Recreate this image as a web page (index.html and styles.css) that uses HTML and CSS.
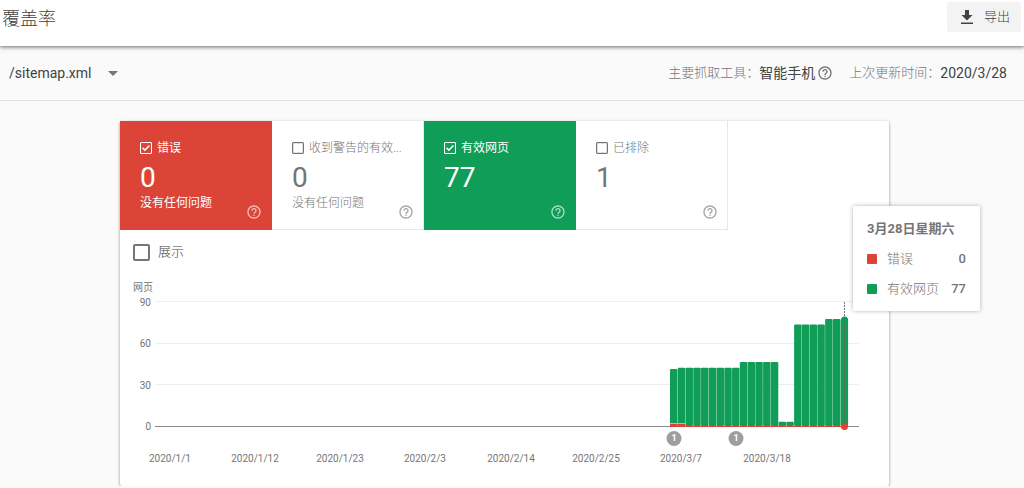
FILE: index.html
```html
<!DOCTYPE html>
<html lang="zh-CN">
<head>
<meta charset="utf-8">
<meta name="viewport" content="width=device-width, initial-scale=1">
<title>覆盖率</title>
<link rel="stylesheet" href="styles.css">
</head>
<body>
<svg class="defs" width="0" height="0" aria-hidden="true">
  <symbol id="help" viewBox="0 0 24 24">
    <path d="M11 18h2v-2h-2v2zm1-16C6.480 2 2 6.480 2 12s4.480 10 10 10 10-4.480 10-10S17.520 2 12 2zm0 18c-4.410 0-8-3.590-8-8s3.590-8 8-8 8 3.590 8 8-3.590 8-8 8zm0-14c-2.210 0-4 1.790-4 4h2c0-1.100.9-2 2-2s2 .9 2 2c0 2-3 1.750-3 5h2c0-2.250 3-2.500 3-5 0-2.210-1.790-4-4-4z"/>
  </symbol>
</svg>

<header class="topbar">
  <h1 class="title">覆盖率</h1>
  <button class="export" type="button">
    <svg class="export-icon" viewBox="0 0 12 14" aria-hidden="true"><path d="M4 0h4v5h3.500L6 10.500 .5 5H4zM0 12.500h12V14H0z"/></svg>
    <span>导出</span>
  </button>
</header>

<div class="filterbar">
  <div class="picker">
    <select class="picker-select" aria-label="站点地图"><option>/sitemap.xml</option></select>
    <svg class="picker-arrow" viewBox="0 0 10 5" aria-hidden="true"><path d="M0 0h10L5 5z"/></svg>
  </div>
  <div class="meta">
    <span class="meta-label">主要抓取工具：</span>
    <span class="meta-value">智能手机</span>
    <button class="help" type="button" aria-label="帮助"><svg viewBox="0 0 24 24"><use href="#help"/></svg></button>
    <span class="meta-label meta-updated">上次更新时间：</span>
    <span class="meta-value">2020/3/28</span>
  </div>
</div>

<main class="content">
  <section class="card">
    <div class="tiles">
      <div class="tile tile-error">
        <label class="tile-label"><input class="check" type="checkbox" checked><span class="tile-name">错误</span></label>
        <div class="tile-count">0</div>
        <div class="tile-note">没有任何问题</div>
        <button class="help tile-help" type="button" aria-label="帮助"><svg viewBox="0 0 24 24"><use href="#help"/></svg></button>
      </div>
      <div class="tile">
        <label class="tile-label"><input class="check" type="checkbox"><span class="tile-name">收到警告的有效...</span></label>
        <div class="tile-count">0</div>
        <div class="tile-note">没有任何问题</div>
        <button class="help tile-help" type="button" aria-label="帮助"><svg viewBox="0 0 24 24"><use href="#help"/></svg></button>
      </div>
      <div class="tile tile-valid">
        <label class="tile-label"><input class="check" type="checkbox" checked><span class="tile-name">有效网页</span></label>
        <div class="tile-count">77</div>
        <button class="help tile-help" type="button" aria-label="帮助"><svg viewBox="0 0 24 24"><use href="#help"/></svg></button>
      </div>
      <div class="tile">
        <label class="tile-label"><input class="check" type="checkbox"><span class="tile-name">已排除</span></label>
        <div class="tile-count">1</div>
        <button class="help tile-help" type="button" aria-label="帮助"><svg viewBox="0 0 24 24"><use href="#help"/></svg></button>
      </div>
    </div>

    <label class="impressions"><input class="check check-large" type="checkbox"><span>展示</span></label>

    <div class="chart">
      <svg class="plot" viewBox="0 0 769 212" role="img" aria-label="网页">
        <g class="axis">
          <text class="axis-title" x="13" y="17">网页</text>
          <g text-anchor="end">
            <text x="31" y="32">90</text>
            <text x="31" y="73">60</text>
            <text x="31" y="115">30</text>
            <text x="31" y="156">0</text>
          </g>
          <g text-anchor="middle">
            <text x="50" y="188">2020/1/1</text>
            <text x="135" y="188">2020/1/12</text>
            <text x="220" y="188">2020/1/23</text>
            <text x="305" y="188">2020/2/3</text>
            <text x="391" y="188">2020/2/14</text>
            <text x="476" y="188">2020/2/25</text>
            <text x="561" y="188">2020/3/7</text>
            <text x="647" y="188">2020/3/18</text>
          </g>
        </g>
        <path class="grid" d="M35 27.500H739M35 69.500H739M35 110.500H739"/>
        <path class="baseline" d="M35 152.500H739"/>
        <g id="bars"></g>
        <path class="error-line" d="M550 152.500H725"/>
        <path class="cursor" d="M724.500 28V45"/>
        <path class="cursor-in" d="M724.500 48V152"/>
        <circle class="valid" cx="724.500" cy="46" r="3.500"/>
        <circle class="error" cx="724.500" cy="152.500" r="3.500"/>
        <g class="note">
          <circle cx="554" cy="164.500" r="7.500"/><text x="554" y="167">1</text>
          <circle cx="616" cy="164.500" r="7.500"/><text x="616" y="167">1</text>
        </g>
      </svg>
      <div class="tooltip">
        <div class="tooltip-title">3月28日星期六</div>
        <div class="tooltip-row"><i class="swatch swatch-error"></i><span>错误</span><b class="tooltip-value">0</b></div>
        <div class="tooltip-row"><i class="swatch swatch-valid"></i><span>有效网页</span><b class="tooltip-value">77</b></div>
      </div>
    </div>
  </section>
</main>
<script src="chart.js"></script>
</body>
</html>
```

FILE: styles.css
```css
* { box-sizing: border-box; }

body {
  margin: 0;
  background: #fafafa;
  color: #757575;
  font: 300 13px/18px Roboto, "Noto Sans CJK SC", sans-serif;
  overflow-x: hidden;
}

button, select, input { font: inherit; color: inherit; margin: 0; }

.defs { position: absolute; }

.topbar {
  display: flex;
  justify-content: space-between;
  align-items: flex-start;
  height: 46px;
  padding: 2px 3px 0 2px;
  background: #fff;
  box-shadow: 0 1px 4px rgba(0, 0, 0, .6);
}

.title {
  margin: 5px 0 0;
  color: #424242;
  font-size: 18px;
  font-weight: 300;
  line-height: 24px;
}

.export {
  display: flex;
  align-items: center;
  gap: 11px;
  height: 30px;
  padding: 0 11px 0 14px;
  border: 0;
  border-radius: 2px;
  background: #f3f3f3;
  color: #424242;
}

.export-icon { width: 12px; height: 14px; fill: #424242; }

.filterbar {
  display: flex;
  justify-content: space-between;
  align-items: center;
  height: 55px;
  padding: 0 17px 0 9px;
  border-bottom: 1px solid #e0e0e0;
}

.picker { display: grid; align-items: center; }

.picker-select {
  grid-area: 1 / 1;
  appearance: none;
  padding: 0 26px 0 0;
  border: 0;
  background: none;
  color: #424242;
  font-size: 14px;
  font-weight: 400;
}

.picker-arrow {
  grid-area: 1 / 1;
  justify-self: end;
  width: 10px;
  height: 5px;
  fill: #757575;
  pointer-events: none;
}

.meta { display: flex; align-items: center; font-size: 14px; }
.meta-label { font-size: 13px; }
.meta-updated { margin-left: 16px; }
.meta-value { color: #424242; font-weight: 400; }

.help {
  display: block;
  padding: 0;
  border: 0;
  background: none;
  line-height: 0;
}
.help svg { width: 16px; height: 16px; fill: currentColor; }
.meta .help { margin-left: 2px; }

.content { padding: 20px 15px 0 0; }

.card {
  max-width: 769px;
  margin: 0 auto;
  border-radius: 2px;
  background: #fff;
  box-shadow: 0 1px 3px rgba(0, 0, 0, .45);
}

.tiles { display: grid; grid-template-columns: repeat(4, minmax(0, 152px)); }

.tile {
  position: relative;
  height: 109px;
  padding: 18px 20px 0;
  border: solid #e8e8e8;
  border-width: 0 1px 1px 0;
  font-size: 12px;
}

.tile-error { background: #db4437; border-color: #db4437; color: #fff; font-weight: 400; }
.tile-valid { background: #0f9d58; border-color: #0f9d58; color: #fff; font-weight: 400; }

.tile-label { display: flex; align-items: center; gap: 5px; }
.tile-name { white-space: nowrap; }
.tile-count { margin-top: 5px; font-size: 28px; line-height: 32px; font-weight: 400; }
.tile-note { line-height: 18px; }
.tile-help { position: absolute; right: 9px; bottom: 9px; opacity: .65; }

.check {
  appearance: none;
  display: grid;
  flex: none;
  place-items: center;
  width: 12px;
  height: 12px;
  border: 1px solid currentColor;
  border-radius: 1px;
  box-shadow: inset 0 0 0 1px rgba(128, 128, 128, .25);
}

.check:checked::before {
  content: "";
  width: 8px;
  height: 8px;
  background: currentColor;
  clip-path: polygon(0 55%, 13% 42%, 36% 64%, 87% 12%, 100% 26%, 36% 90%);
}

.check-large { width: 17px; height: 17px; border: 2px solid #757575; border-radius: 2px; box-shadow: none; }

.impressions {
  display: flex;
  align-items: center;
  gap: 8px;
  width: max-content;
  padding: 13px 13px 0;
  color: #424242;
}

.chart { position: relative; margin-top: 13px; }
.plot { display: block; width: 100%; }

.axis { fill: #757575; font-size: 10px; font-weight: 400; }
.grid { stroke: #eee; }
.baseline { stroke: #8c8c8c; }
.error-line { stroke: #db4437; }
.valid { fill: #0f9d58; }
.error { fill: #db4437; }
.error-halo { fill: #e9a9a0; }
.cursor { stroke: #757575; stroke-dasharray: 2 1; }
.cursor-in { stroke: #477a5a; }
.note circle { fill: #9e9e9e; }
.note text { fill: #fff; font-size: 9px; font-weight: 700; text-anchor: middle; }

.tooltip {
  position: absolute;
  top: -68px;
  right: -91px;
  width: 127px;
  padding: 14px 14px 13px;
  border-radius: 2px;
  background: rgba(255, 255, 255, .96);
  box-shadow: 0 0 4px rgba(0, 0, 0, .3);
}

.tooltip-title { font-weight: 700; }
.tooltip-row { display: flex; align-items: center; margin-top: 12px; }
.swatch { width: 10px; height: 10px; margin-right: 10px; border-radius: 1px; }
.swatch-error { background: #db4437; }
.swatch-valid { background: #0f9d58; }
.tooltip-value { margin-left: auto; font-weight: 500; }
```

FILE: chart.js
```js
const values = [41, 42, 42, 42, 42, 42, 42, 42, 42, 46, 46, 46, 46, 46, 3, 3, 73, 73, 73, 73, 77, 77, 77];
const left = 550;
const step = 178.4 / values.length;
const base = 152;
const scale = 125 / 90;
const bars = document.getElementById("bars");

function addRect(name, x, y, width, height, radius) {
  const rect = document.createElementNS("http://www.w3.org/2000/svg", "rect");
  const attrs = { class: name, x, y, width, height, rx: radius };
  for (const key in attrs) rect.setAttribute(key, attrs[key]);
  bars.appendChild(rect);
}

values.forEach((value, i) => {
  const height = value * scale;
  addRect("valid", left + i * step, base - height, step - 0.3, height, 1);
});

for (let i = 0; i < 2; i++) {
  addRect("error-halo", left + i * step, base - 3, step, 1, 0);
  addRect("error", left + i * step, base - 2, step - 0.3, 2, 0);
}
```
